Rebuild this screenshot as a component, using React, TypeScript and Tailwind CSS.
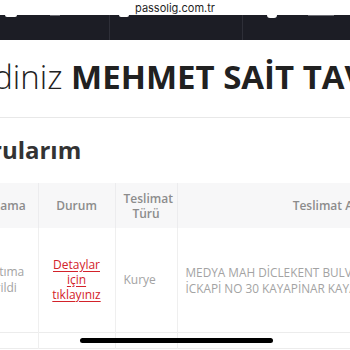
import React from "react";

const rows = [
  {
    status: "Dağıtıma Verildi",
    delivery: "Kurye",
    address: ["MEDYA MAH DİCLEKENT BULVARI DIŞKAPI NO 12", "İCKAPİ NO 30 KAYAPİNAR KAYAPINAR/DİYARBAKIR"],
  },
];

function App() {
  return (
    <div className="relative w-[350px] h-[350px] overflow-hidden bg-white font-['Open_Sans',sans-serif]">
      {/* browser address bar */}
      <div className="h-[15px] bg-white flex items-end justify-center text-[11px] leading-[13px] text-[#1f1f1f] font-['Inter',sans-serif]">
        passolig.com.tr
      </div>

      {/* dark top menu, icons scrolled off */}
      <nav className="h-[25px] bg-[#1c1d25] flex">
        <div className="w-[110px] flex items-start gap-[33px] pl-[5px] border-r border-[#2e2f38]">
          <span className="w-[12px] h-[2px] bg-white rounded-b-full" />
          <span className="w-[10px] h-[1px] bg-[#6b6c73]" />
        </div>
        <div className="w-[133px] flex items-start pl-[9px] border-r border-[#2e2f38]">
          <span className="w-[10px] h-[2px] bg-white rounded-b-full" />
        </div>
        <div className="flex-1 flex items-start gap-[31px] pl-[24px]">
          <span className="w-[10px] h-[3px] bg-white rounded-b-full" />
          <span className="w-[26px] h-[1px] bg-[#6b6c73]" />
        </div>
      </nav>

      <div className="overflow-hidden">
        <h1 className="mt-[17px] -ml-[108px] whitespace-nowrap text-[33px] leading-[40px] text-[#212121]">
          <span className="font-light">Hoşgeldiniz </span>
          <span className="font-bold">MEHMET SAİT TAVŞAN</span>
        </h1>
        <div className="mt-[20px] border-b border-[#e8e8e8]" />

        <h2 className="mt-[17px] -ml-[81px] whitespace-nowrap text-[24px] leading-[30px] font-bold text-[#333]">
          Başvurularım
        </h2>

        <table className="mt-[18px] -ml-[39px] table-fixed border-collapse w-[536px] text-[12px]">
          <colgroup>
            <col className="w-[77px]" />
            <col className="w-[77px]" />
            <col className="w-[62px]" />
            <col className="w-[320px]" />
          </colgroup>
          <thead>
            <tr className="h-[45px] bg-[#f7f7f8] text-[#8c8c8c] font-semibold leading-[15px]">
              <th className="border-r border-[#ececee] font-semibold">Açıklama</th>
              <th className="border-r border-[#ececee] font-semibold">Durum</th>
              <th className="border-r border-[#ececee] font-semibold px-2">Teslimat Türü</th>
              <th className="font-semibold">Teslimat Adresi</th>
            </tr>
          </thead>
          <tbody className="text-[#a3a3a3] leading-[16px]">
            {rows.map((row, idx) => (
              <tr key={idx} className="h-[104px] border-b border-[#ececec]">
                <td className="border-r border-[#efefef] text-center px-2">{row.status}</td>
                <td className="border-r border-[#efefef] text-center px-2">
                  <a href="#" className="text-[#d3222a] underline underline-offset-2 leading-[15px] inline-block">
                    Detaylar için tıklayınız
                  </a>
                </td>
                <td className="border-r border-[#efefef] px-2">{row.delivery}</td>
                <td className="px-2 text-[11.8px] whitespace-nowrap overflow-hidden">
                  {row.address.map((line) => (
                    <div key={line}>{line}</div>
                  ))}
                </td>
              </tr>
            ))}
            <tr className="h-[16px] border-b border-[#ececec]">
              <td className="border-r border-[#efefef]" />
              <td className="border-r border-[#efefef]" />
              <td className="border-r border-[#efefef]" />
              <td />
            </tr>
          </tbody>
        </table>
      </div>

      {/* iOS home indicator */}
      <div className="absolute left-[80px] top-[338px] w-[193px] h-[5px] rounded-full bg-black" />
    </div>
  );
}

export default App;
